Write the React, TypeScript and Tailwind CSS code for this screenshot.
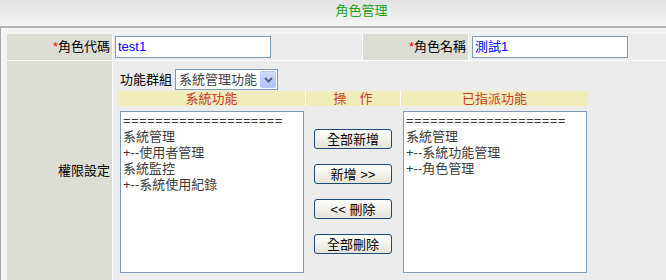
import React from 'react';

const font = "font-['Liberation_Sans','Noto_Sans_CJK_TC',sans-serif]";

function Field({ value }: { value: string }) {
  return (
    <div className="w-[156px] h-[22px] bg-white border border-[#7f9db9] flex items-center pl-[2px] text-[13px] text-[#0000ff]">
      {value}
    </div>
  );
}

function ListBox({ items }: { items: string[] }) {
  return (
    <div className="ml-[2px] mt-[4px] w-[184px] h-[162px] bg-white border border-[#7f9db9] pl-[2px] pt-px text-[13px] leading-[16px] text-[#3c3c3c]">
      <div className="tracking-[0.4px]">====================</div>
      {items.map((t) => (
        <div key={t} className="whitespace-nowrap">
          {t}
        </div>
      ))}
    </div>
  );
}

function Btn({ children }: { children: React.ReactNode }) {
  return (
    <button className="w-[78px] h-[20px] rounded-[3px] border border-[#1c4a7a] bg-gradient-to-b from-white to-[#e6e3d6] text-[13px] leading-none text-black flex items-center justify-center">
      {children}
    </button>
  );
}

export default function App() {
  return (
    <div className={`w-[666px] h-[280px] overflow-hidden bg-[#f4f4f4] ${font}`}>
      {/* Header */}
      <div className="h-[28px] bg-gradient-to-b from-[#e2e2e2] to-[#f5f5f5] border-b-2 border-[#b6b6b6] flex items-center justify-center pl-[57px] pb-[4px] text-[13px] text-[#19a319]">
        角色管理
      </div>

      <div className="border-l border-[#a8a8a8] pl-[6px] pt-[6px] h-full">
        <div className="grid grid-cols-[105px_249px_105px_1fr] gap-px bg-white">
          {/* Row 1 */}
          <div className="h-[26px] bg-[#dcddd5] flex items-center justify-end pr-[2px] text-[13px] text-black">
            <span className="text-[#ff0000]">*</span>角色代碼
          </div>
          <div className="bg-[#ececec] flex items-center pl-[2px]">
            <Field value="test1" />
          </div>
          <div className="bg-[#dcddd5] flex items-center justify-end pr-[2px] text-[13px] text-black">
            <span className="text-[#ff0000]">*</span>角色名稱
          </div>
          <div className="bg-[#ececec] flex items-center pl-[3px]">
            <Field value="測試1" />
          </div>

          {/* Row 2 */}
          <div className="h-[219px] bg-[#dcddd5] flex items-center justify-end pr-[2px] text-[13px] text-black">
            權限設定
          </div>
          <div className="col-span-3 bg-[#ececec] pl-[5px] pt-[8px]">
            <div className="flex items-center h-[21px] pl-[2px] gap-[3px] text-[13px]">
              <span className="text-black">功能群組</span>
              <div className="w-[103px] h-[21px] bg-white border border-[#7f9db9] flex items-center justify-between pl-[3px] pr-px">
                <span className="text-[#444]">系統管理功能</span>
                <span className="w-[16px] h-[17px] rounded-[2px] bg-gradient-to-b from-[#cfdcfb] to-[#aec4f6] border border-[#b8cbf5] flex items-center justify-center">
                  <svg width="9" height="6" viewBox="0 0 9 6">
                    <polyline points="1,1 4.5,4.5 8,1" fill="none" stroke="#4d6185" strokeWidth="2" />
                  </svg>
                </span>
              </div>
            </div>

            <div className="mt-[1px] flex gap-px bg-white w-[470px] h-[15px] text-[13px] leading-[15px] text-[#c33c2a]">
              <div className="w-[187px] bg-[#f1edbb] text-center">系統功能</div>
              <div className="w-[94px] bg-[#f1edbb] text-center">操　作</div>
              <div className="flex-1 bg-[#f1edbb] text-center">已指派功能</div>
            </div>

            <div className="mt-px flex gap-px w-[470px]">
              <div className="w-[187px]">
                <ListBox items={['系統管理', '+--使用者管理', '系統監控', '+--系統使用紀錄']} />
              </div>
              <div className="w-[94px] flex flex-col items-center gap-[15px] pt-[22px]">
                <Btn>全部新增</Btn>
                <Btn>新增 &gt;&gt;</Btn>
                <Btn>&lt;&lt; 刪除</Btn>
                <Btn>全部刪除</Btn>
              </div>
              <div className="flex-1">
                <ListBox items={['系統管理', '+--系統功能管理', '+--角色管理']} />
              </div>
            </div>
          </div>
        </div>
      </div>
    </div>
  );
}
